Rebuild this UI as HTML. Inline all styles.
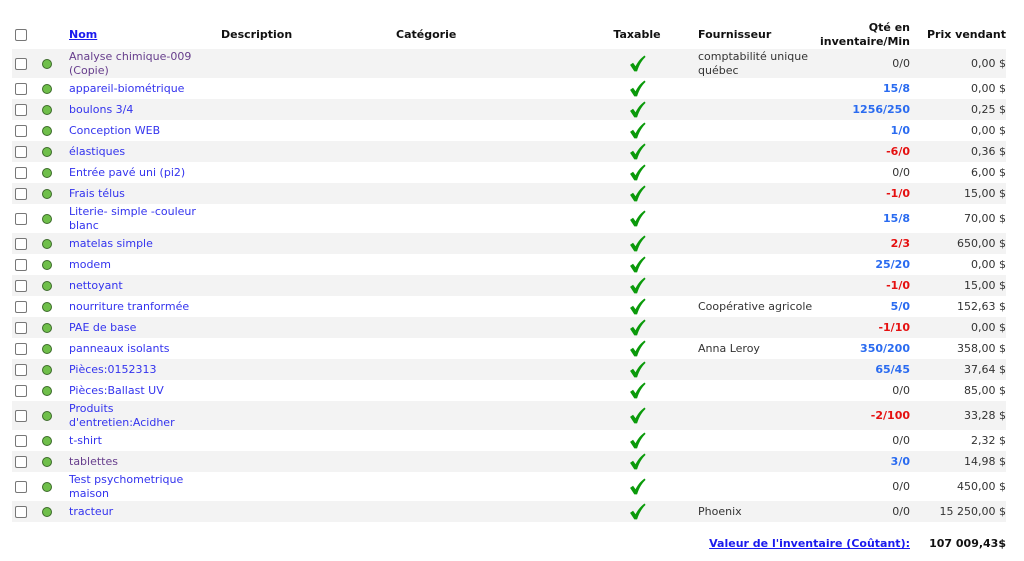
<!DOCTYPE html>
<html><head><meta charset="utf-8"><style>
body{margin:0;background:#fff;font-family:"DejaVu Sans","Liberation Sans",sans-serif;font-size:11px;color:#333;}
table{position:absolute;left:12px;top:21px;border-collapse:collapse;table-layout:fixed;width:994px;}
td,th{padding:0;vertical-align:middle;line-height:14px;}
th{font-weight:bold;color:#111;text-align:left;vertical-align:middle;line-height:14px;}
thead tr{height:28px}
tr.r{height:21px}tr.d{height:29px}
tbody tr:nth-child(odd){background:#f3f3f3}
.cb{width:12px;height:12px;border:1px solid #777;border-radius:2px;background:#fff;margin-left:3px;box-sizing:border-box;}
.dot{width:10px;height:10px;border-radius:50%;background:#6fbf4a;border:1px solid #3c6a2a;margin-left:8px;box-sizing:border-box;}
a{color:#3333ee;text-decoration:none}
a.v{color:#663d8c}
.n{padding-left:9px}
.f{padding-left:24px}
.q{text-align:right;padding-right:4px}
.p{text-align:right}
.b{color:#2a6bf0;font-weight:bold}
.rd{color:#e51010;font-weight:bold}
.t{text-align:center}
.t svg{display:block;margin:0 auto}
th a{color:#1a1aee;text-decoration:underline}
.foot{position:absolute;top:537px;font-weight:bold;font-size:11px;}
</style></head><body>
<svg width="0" height="0" style="position:absolute"><defs><symbol id="ck" viewBox="0 0 16 16"><path d="M1 9.3 L3.8 7.3 L6.2 10.6 C8.4 6.2 11 3.2 14.6 0.5 L15.6 1.8 C12.2 5 9.6 9.2 7.6 15.4 L5 15.4 Z" fill="#0a9a0a"/></symbol></defs></svg>
<table>
<colgroup><col style="width:22px"><col style="width:26px"><col style="width:152px"><col style="width:175px"><col style="width:213px"><col style="width:74px"><col style="width:141px"><col style="width:99px"><col style="width:92px"></colgroup>
<thead><tr><th><div class="cb"></div></th><th></th><th class="n"><a>Nom</a></th><th style="padding-left:9px">Description</th><th style="padding-left:9px">Catégorie</th><th style="text-align:center">Taxable</th><th class="f">Fournisseur</th><th style="text-align:right;padding-right:4px">Qté en<br>inventaire/Min</th><th style="text-align:right">Prix vendant</th></tr></thead>
<tbody>
<tr class="d"><td><div class="cb"></div></td><td><div class="dot"></div></td><td class="n"><a class="v">Analyse chimique-009 (Copie)</a></td><td></td><td></td><td class="t"><svg width="17" height="17"><use href="#ck"/></svg></td><td class="f">comptabilité unique québec</td><td class="q">0/0</td><td class="p">0,00 $</td></tr>
<tr class="r"><td><div class="cb"></div></td><td><div class="dot"></div></td><td class="n"><a>appareil-biométrique</a></td><td></td><td></td><td class="t"><svg width="17" height="17"><use href="#ck"/></svg></td><td class="f"></td><td class="q b">15/8</td><td class="p">0,00 $</td></tr>
<tr class="r"><td><div class="cb"></div></td><td><div class="dot"></div></td><td class="n"><a>boulons 3/4</a></td><td></td><td></td><td class="t"><svg width="17" height="17"><use href="#ck"/></svg></td><td class="f"></td><td class="q b">1256/250</td><td class="p">0,25 $</td></tr>
<tr class="r"><td><div class="cb"></div></td><td><div class="dot"></div></td><td class="n"><a>Conception WEB</a></td><td></td><td></td><td class="t"><svg width="17" height="17"><use href="#ck"/></svg></td><td class="f"></td><td class="q b">1/0</td><td class="p">0,00 $</td></tr>
<tr class="r"><td><div class="cb"></div></td><td><div class="dot"></div></td><td class="n"><a>élastiques</a></td><td></td><td></td><td class="t"><svg width="17" height="17"><use href="#ck"/></svg></td><td class="f"></td><td class="q rd">-6/0</td><td class="p">0,36 $</td></tr>
<tr class="r"><td><div class="cb"></div></td><td><div class="dot"></div></td><td class="n"><a>Entrée pavé uni (pi2)</a></td><td></td><td></td><td class="t"><svg width="17" height="17"><use href="#ck"/></svg></td><td class="f"></td><td class="q">0/0</td><td class="p">6,00 $</td></tr>
<tr class="r"><td><div class="cb"></div></td><td><div class="dot"></div></td><td class="n"><a>Frais télus</a></td><td></td><td></td><td class="t"><svg width="17" height="17"><use href="#ck"/></svg></td><td class="f"></td><td class="q rd">-1/0</td><td class="p">15,00 $</td></tr>
<tr class="d"><td><div class="cb"></div></td><td><div class="dot"></div></td><td class="n"><a>Literie- simple -couleur blanc</a></td><td></td><td></td><td class="t"><svg width="17" height="17"><use href="#ck"/></svg></td><td class="f"></td><td class="q b">15/8</td><td class="p">70,00 $</td></tr>
<tr class="r"><td><div class="cb"></div></td><td><div class="dot"></div></td><td class="n"><a>matelas simple</a></td><td></td><td></td><td class="t"><svg width="17" height="17"><use href="#ck"/></svg></td><td class="f"></td><td class="q rd">2/3</td><td class="p">650,00 $</td></tr>
<tr class="r"><td><div class="cb"></div></td><td><div class="dot"></div></td><td class="n"><a>modem</a></td><td></td><td></td><td class="t"><svg width="17" height="17"><use href="#ck"/></svg></td><td class="f"></td><td class="q b">25/20</td><td class="p">0,00 $</td></tr>
<tr class="r"><td><div class="cb"></div></td><td><div class="dot"></div></td><td class="n"><a>nettoyant</a></td><td></td><td></td><td class="t"><svg width="17" height="17"><use href="#ck"/></svg></td><td class="f"></td><td class="q rd">-1/0</td><td class="p">15,00 $</td></tr>
<tr class="r"><td><div class="cb"></div></td><td><div class="dot"></div></td><td class="n"><a>nourriture tranformée</a></td><td></td><td></td><td class="t"><svg width="17" height="17"><use href="#ck"/></svg></td><td class="f">Coopérative agricole</td><td class="q b">5/0</td><td class="p">152,63 $</td></tr>
<tr class="r"><td><div class="cb"></div></td><td><div class="dot"></div></td><td class="n"><a>PAE de base</a></td><td></td><td></td><td class="t"><svg width="17" height="17"><use href="#ck"/></svg></td><td class="f"></td><td class="q rd">-1/10</td><td class="p">0,00 $</td></tr>
<tr class="r"><td><div class="cb"></div></td><td><div class="dot"></div></td><td class="n"><a>panneaux isolants</a></td><td></td><td></td><td class="t"><svg width="17" height="17"><use href="#ck"/></svg></td><td class="f">Anna Leroy</td><td class="q b">350/200</td><td class="p">358,00 $</td></tr>
<tr class="r"><td><div class="cb"></div></td><td><div class="dot"></div></td><td class="n"><a>Pièces:0152313</a></td><td></td><td></td><td class="t"><svg width="17" height="17"><use href="#ck"/></svg></td><td class="f"></td><td class="q b">65/45</td><td class="p">37,64 $</td></tr>
<tr class="r"><td><div class="cb"></div></td><td><div class="dot"></div></td><td class="n"><a>Pièces:Ballast UV</a></td><td></td><td></td><td class="t"><svg width="17" height="17"><use href="#ck"/></svg></td><td class="f"></td><td class="q">0/0</td><td class="p">85,00 $</td></tr>
<tr class="d"><td><div class="cb"></div></td><td><div class="dot"></div></td><td class="n"><a>Produits d'entretien:Acidher</a></td><td></td><td></td><td class="t"><svg width="17" height="17"><use href="#ck"/></svg></td><td class="f"></td><td class="q rd">-2/100</td><td class="p">33,28 $</td></tr>
<tr class="r"><td><div class="cb"></div></td><td><div class="dot"></div></td><td class="n"><a>t-shirt</a></td><td></td><td></td><td class="t"><svg width="17" height="17"><use href="#ck"/></svg></td><td class="f"></td><td class="q">0/0</td><td class="p">2,32 $</td></tr>
<tr class="r"><td><div class="cb"></div></td><td><div class="dot"></div></td><td class="n"><a class="v">tablettes</a></td><td></td><td></td><td class="t"><svg width="17" height="17"><use href="#ck"/></svg></td><td class="f"></td><td class="q b">3/0</td><td class="p">14,98 $</td></tr>
<tr class="d"><td><div class="cb"></div></td><td><div class="dot"></div></td><td class="n"><a>Test psychometrique maison</a></td><td></td><td></td><td class="t"><svg width="17" height="17"><use href="#ck"/></svg></td><td class="f"></td><td class="q">0/0</td><td class="p">450,00 $</td></tr>
<tr class="r"><td><div class="cb"></div></td><td><div class="dot"></div></td><td class="n"><a>tracteur</a></td><td></td><td></td><td class="t"><svg width="17" height="17"><use href="#ck"/></svg></td><td class="f">Phoenix</td><td class="q">0/0</td><td class="p">15 250,00 $</td></tr>
</tbody></table>
<div class="foot" style="right:114px"><a style="color:#1a1aee;text-decoration:underline">Valeur de l'inventaire (Coûtant):</a></div>
<div class="foot" style="right:18px;color:#111">107 009,43$</div>
</body></html>
